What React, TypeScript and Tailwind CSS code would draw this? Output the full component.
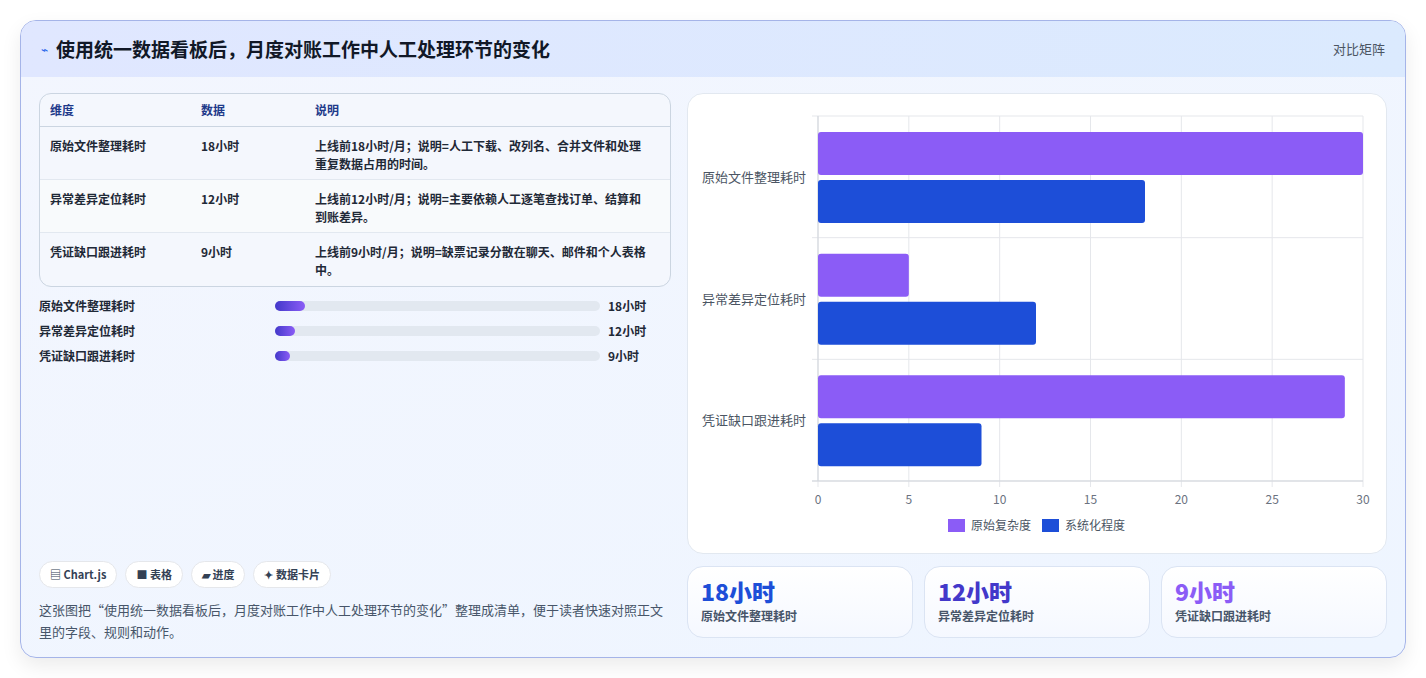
const F = { fontFamily: '"Noto Sans CJK SC", "Noto Sans", sans-serif' };

const rows = [
  { name: "原始文件整理耗时", v: "18小时", d: "上线前18小时/月；说明=人工下载、改列名、合并文件和处理重复数据占用的时间。", raw: 30, sys: 18 },
  { name: "异常差异定位耗时", v: "12小时", d: "上线前12小时/月；说明=主要依赖人工逐笔查找订单、结算和到账差异。", raw: 5, sys: 12 },
  { name: "凭证缺口跟进耗时", v: "9小时", d: "上线前9小时/月；说明=缺票记录分散在聊天、邮件和个人表格中。", raw: 29, sys: 9 },
];

function Chart() {
  const x0 = 130, x1 = 675, top = 22, h = 365;
  const sx = (v: number) => x0 + ((x1 - x0) * v) / 30;
  const rowH = h / 3;
  return (
    <svg width="698" height="460" style={F}>
      {[0, 5, 10, 15, 20, 25, 30].map((t) => (
        <g key={t}>
          <line x1={sx(t)} x2={sx(t)} y1={top} y2={top + h + 6} stroke="#e5e7eb" />
          <text x={sx(t)} y={top + h + 23} fontSize="12" fill="#6b7280" textAnchor="middle">{t}</text>
        </g>
      ))}
      {[0, 1, 2, 3].map((i) => (
        <line key={i} x1={x0 - 6} x2={x1} y1={top + i * rowH} y2={top + i * rowH} stroke="#e5e7eb" />
      ))}
      <line x1={x0} x2={x0} y1={top} y2={top + h} stroke="#d1d5db" />
      <line x1={x0 - 6} x2={x1} y1={top + h} y2={top + h} stroke="#d1d5db" />
      {rows.map((r, i) => {
        const y = top + i * rowH;
        return (
          <g key={r.name}>
            <rect x={x0} y={y + 16} width={sx(r.raw) - x0} height={43} rx="3" fill="#8b5cf6" />
            <rect x={x0} y={y + 64} width={sx(r.sys) - x0} height={43} rx="3" fill="#1d4ed8" />
            <text x={x0 - 12} y={y + rowH / 2 + 5} fontSize="13" fill="#4b5563" textAnchor="end">{r.name}</text>
          </g>
        );
      })}
      <rect x="260" y="425" width="17" height="13" fill="#8b5cf6" />
      <text x="283" y="436" fontSize="12" fill="#4b5563">原始复杂度</text>
      <rect x="354" y="425" width="17" height="13" fill="#1d4ed8" />
      <text x="377" y="436" fontSize="12" fill="#4b5563">系统化程度</text>
    </svg>
  );
}

export default function App() {
  return (
    <div className="min-h-screen bg-white px-5 pt-5" style={F}>
      <div className="h-[638px] rounded-2xl border border-[#a5b4e8] bg-gradient-to-br from-[#f3f6fe] to-[#eef5ff] shadow-[0_8px_20px_rgba(0,0,0,0.08)] overflow-hidden">
        <div className="h-[56px] flex items-center justify-between px-5 bg-gradient-to-r from-[#e0e7ff] to-[#dbeafe]">
          <div className="flex items-center gap-2">
            <span className="text-[#2563eb] text-xs">⌁</span>
            <h1 className="text-[19px] font-bold text-[#111827]">使用统一数据看板后，月度对账工作中人工处理环节的变化</h1>
          </div>
          <span className="text-[13px] text-[#4b5563]">对比矩阵</span>
        </div>
        <div className="flex gap-4 px-[18px] pt-4">
          <div className="w-[634px] flex flex-col h-[563px]">
            <div className="rounded-xl border border-[#cbd5e1] overflow-hidden bg-[#f4f7fd]">
              <div className="grid grid-cols-[151px_114px_1fr] h-[33px] items-center px-[10px] text-xs font-bold text-[#1e3a8a] border-b border-[#cbd5e1]">
                <span>维度</span><span>数据</span><span>说明</span>
              </div>
              {rows.map((r, i) => (
                <div key={r.name} className={`grid grid-cols-[151px_114px_1fr] h-[53px] pt-[10px] px-[10px] text-xs font-semibold text-[#1f2937] leading-[18px] ${i === 1 ? "bg-[#f8fafc]" : ""} ${i < 2 ? "border-b border-[#e2e8f0]" : ""}`}>
                  <span>{r.name}</span><span>{r.v}</span><span className="pr-3">{r.d}</span>
                </div>
              ))}
            </div>
            <div className="flex flex-col gap-[7px] mt-[10px]">
              {rows.map((r, i) => (
                <div key={r.name} className="flex items-center h-[18px] text-xs font-semibold text-[#1f2937]">
                  <span className="w-[236px]">{r.name}</span>
                  <div className="w-[325px] h-[10px] rounded-full bg-[#e2e8f0]">
                    <div className={`h-full rounded-full bg-gradient-to-r from-[#4338ca] to-[#8b5cf6] ${["w-[30px]", "w-[20px]", "w-[15px]"][i]}`} />
                  </div>
                  <span className="ml-2">{r.v}</span>
                </div>
              ))}
            </div>
            <div className="flex-1" />
            <div className="flex gap-2 text-[11px] font-semibold text-[#334155]">
              {["▤ Chart.js", "■ 表格", "▰ 进度", "✦ 数据卡片"].map((t) => (
                <span key={t} className="rounded-full bg-white border border-[#e5e7eb] px-[10px] h-[27px] flex items-center">{t}</span>
              ))}
            </div>
            <p className="mt-[11px] text-[13px] leading-[22px] text-[#475569] pb-[13px]">
              这张图把“使用统一数据看板后，月度对账工作中人工处理环节的变化”整理成清单，便于读者快速对照正文里的字段、规则和动作。
            </p>
          </div>
          <div className="flex-1 flex flex-col gap-3">
            <div className="h-[461px] rounded-2xl bg-white border border-[#e2e8f0]">
              <Chart />
            </div>
            <div className="grid grid-cols-3 gap-[11px]">
              {[["18小时", "text-[#1d4ed8]", "原始文件整理耗时"], ["12小时", "text-[#4338ca]", "异常差异定位耗时"], ["9小时", "text-[#8b5cf6]", "凭证缺口跟进耗时"]].map(([v, c, l]) => (
                <div key={l} className="h-[72px] rounded-2xl bg-gradient-to-b from-white to-[#f5f8ff] border border-[#dbe4f3] px-[13px] pt-[9px]">
                  <div className={`text-[23px] font-extrabold leading-[30px] ${c}`}>{v}</div>
                  <div className="text-xs font-semibold text-[#475569] mt-[2px]">{l}</div>
                </div>
              ))}
            </div>
          </div>
        </div>
      </div>
    </div>
  );
}
